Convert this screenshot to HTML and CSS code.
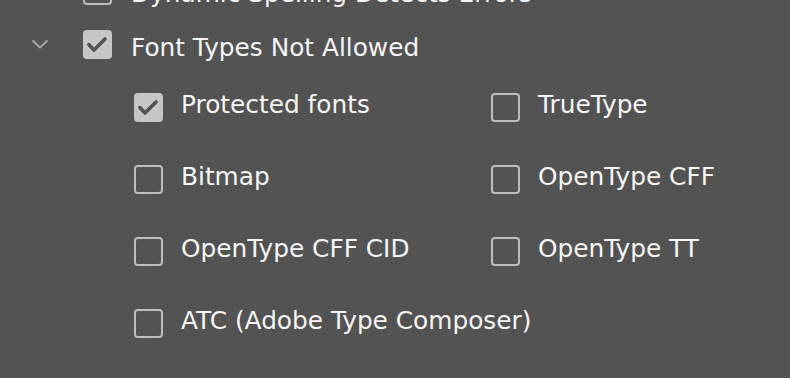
FILE: index.html
```html
<!DOCTYPE html>
<html>
<head>
<meta charset="utf-8">
<link rel="stylesheet" href="styles.css">
</head>
<body>
<div class="panel">
  <div class="head-row first">
    <div class="toggle"></div>
    <span class="box"></span>
    <span class="head-label">Dynamic Spelling Detects Errors</span>
  </div>
  <div class="head-row">
    <div class="toggle">
      <svg class="chevron" width="18" height="10" viewBox="0 0 18 10"><path d="M1.5 1.5 L9 8.5 L16.5 1.5" fill="none" stroke="#a9a9a9" stroke-width="2"/></svg>
    </div>
    <span class="box checked"><svg width="29" height="29" viewBox="0 0 29 29"><path d="M5.8 14.6 L11 20 L22 9" fill="none" stroke="#535353" stroke-width="3.6" stroke-linecap="round" stroke-linejoin="round"/></svg></span>
    <span class="head-label">Font Types Not Allowed</span>
  </div>
  <div class="options">
    <div class="opt"><span class="box checked"><svg width="29" height="29" viewBox="0 0 29 29"><path d="M5.8 14.6 L11 20 L22 9" fill="none" stroke="#535353" stroke-width="3.6" stroke-linecap="round" stroke-linejoin="round"/></svg></span><span class="opt-label">Protected fonts</span></div>
    <div class="opt"><span class="box"></span><span class="opt-label">TrueType</span></div>
    <div class="opt"><span class="box"></span><span class="opt-label">Bitmap</span></div>
    <div class="opt"><span class="box"></span><span class="opt-label">OpenType CFF</span></div>
    <div class="opt"><span class="box"></span><span class="opt-label">OpenType CFF CID</span></div>
    <div class="opt"><span class="box"></span><span class="opt-label">OpenType TT</span></div>
    <div class="opt"><span class="box"></span><span class="opt-label">ATC (Adobe Type Composer)</span></div>
  </div>
</div>
</body>
</html>
```

FILE: styles.css
```css
html, body {
  margin: 0;
  padding: 0;
  background: #535353;
  overflow: hidden;
}
body {
  width: 790px;
  height: 378px;
  font-family: "DejaVu Sans", "Liberation Sans", sans-serif;
  font-size: 24.8px;
  color: #f5f5f5;
}
.panel {
  display: flex;
  flex-direction: column;
}
.head-row {
  display: flex;
  align-items: center;
  height: 54px;
}
.head-row.first {
  margin-top: -37px;
}
.toggle {
  width: 83px;
  flex: none;
  display: flex;
  align-items: center;
  padding-left: 31px;
  box-sizing: border-box;
}
.chevron {
  display: block;
}
.box {
  width: 29px;
  height: 29px;
  flex: none;
  box-sizing: border-box;
  border: 2px solid #bdbdbd;
  border-radius: 4px;
  display: block;
  position: relative;
}
.box.checked {
  background: #c6c6c6;
  border-color: #c6c6c6;
}
.box.checked svg {
  position: absolute;
  left: -2px;
  top: -2px;
}
.head-label {
  margin-left: 19px;
  padding-top: 6px;
  white-space: nowrap;
}
.options {
  display: grid;
  grid-template-columns: 357px auto;
  grid-auto-rows: 72px;
  padding-left: 134px;
}
.opt {
  display: flex;
  align-items: center;
}
.opt-label {
  margin-left: 18px;
  padding-bottom: 6px;
  white-space: nowrap;
}
```
